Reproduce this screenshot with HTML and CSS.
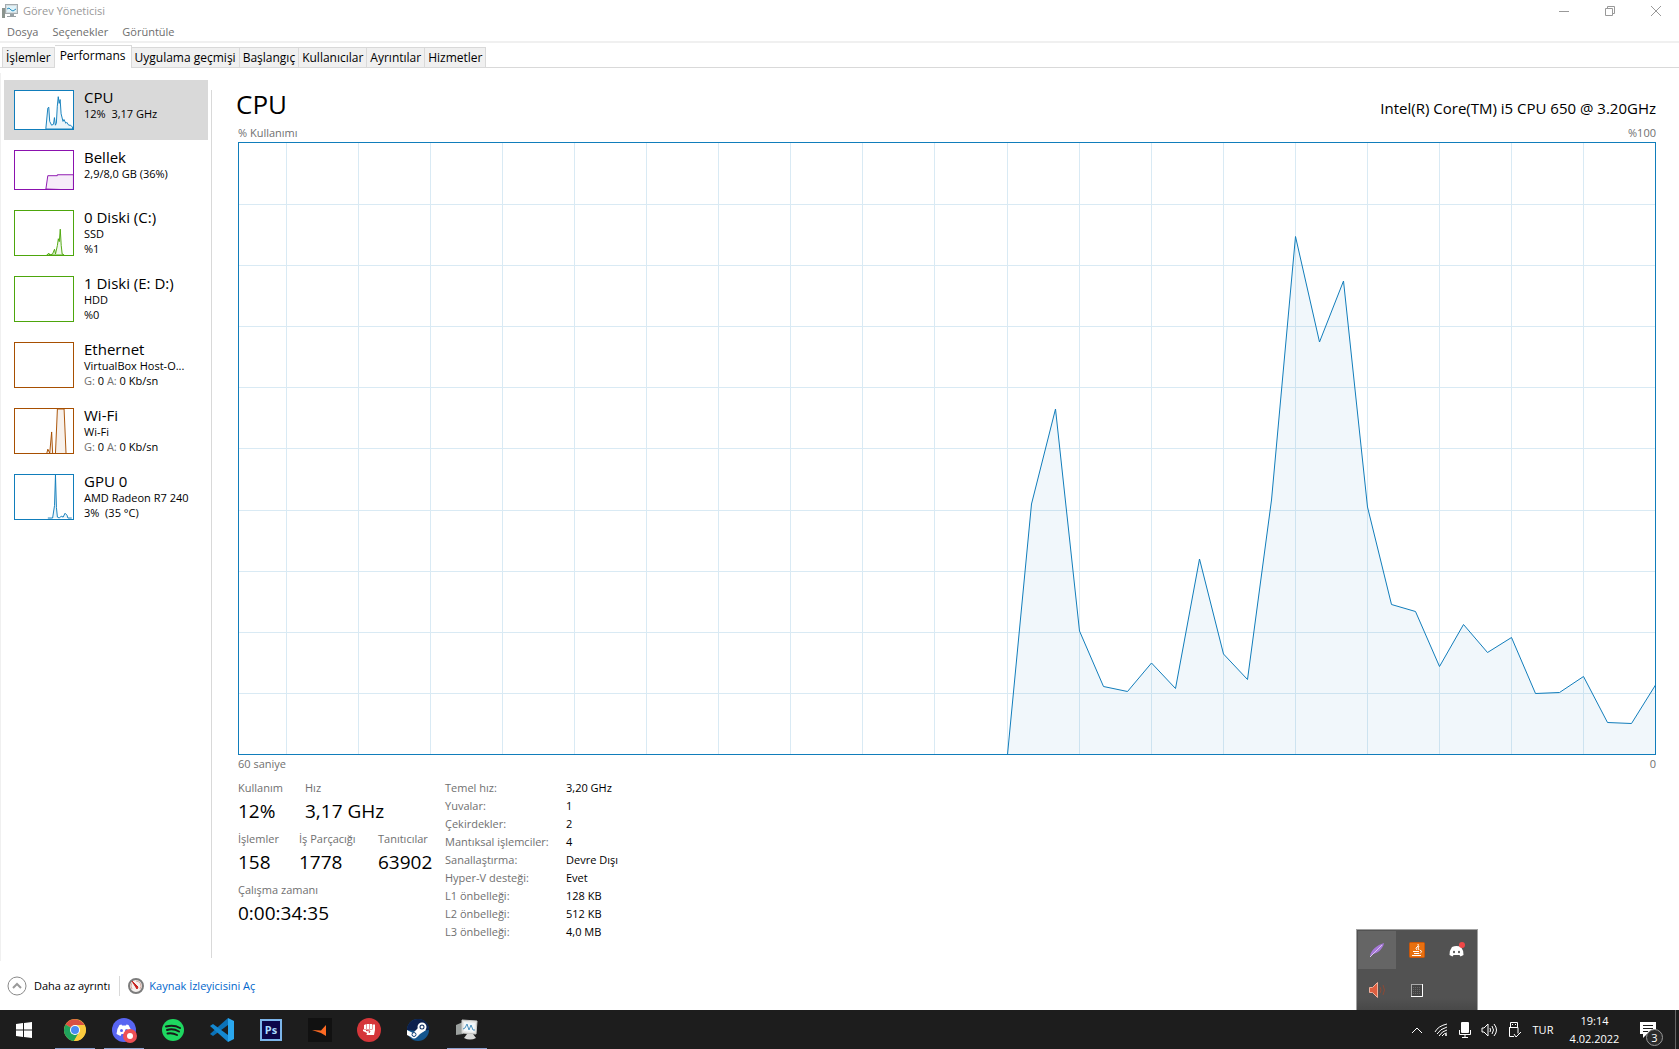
FILE: index.html
```
<!DOCTYPE html>
<html lang="tr">
<head>
    <meta charset="UTF-8">
    <title>Görev Yöneticisi</title>
    <link rel="stylesheet" href="styles.css">
</head>
<body>
    <div class="window">
        <header class="titlebar">
            <svg class="app-icon" width="16" height="15" viewBox="0 0 16 15">
                <rect x="0" y="4" width="3" height="10" fill="#8b948e"/>
                <rect x="3.500" y=".5" width="12" height="9" fill="#d5dde0" stroke="#a3abaf"/>
                <rect x="5" y="2" width="9" height="6" fill="#dff3fa"/>
                <path d="M5 5l2-1 2 2 2 1 3-2" fill="none" stroke="#2a8fc0"/>
                <path d="M8 10h4v2h2v1H5v-1h3z" fill="#98a1a5"/>
            </svg>
            <span class="title">Görev Yöneticisi</span>
            <button class="win-btn" aria-label="Simge durumuna küçült"><svg width="10" height="10"><path d="M0 5.500h10"/></svg></button>
            <button class="win-btn" aria-label="Önceki boyut"><svg width="10" height="10"><path d="M.5 2.500h7v7h-7zM2.500 2V.5h7v7H8"/></svg></button>
            <button class="win-btn" aria-label="Kapat"><svg width="10" height="10"><path d="M0 0l10 10M10 0L0 10"/></svg></button>
        </header>
        <nav class="menu">
            <button>Dosya</button>
            <button>Seçenekler</button>
            <button>Görüntüle</button>
        </nav>
        <div class="tabs">
            <button>İşlemler</button>
            <button class="active">Performans</button>
            <button>Uygulama geçmişi</button>
            <button>Başlangıç</button>
            <button>Kullanıcılar</button>
            <button>Ayrıntılar</button>
            <button>Hizmetler</button>
        </div>

        <div class="content">
            <aside class="sidebar">
                <button class="item selected">
                    <svg class="thumb blue" viewBox="0 0 60 40"><path d="M32 39L34 18L35 17L36 32L38 36L40 35L41 28L42 36L43 34L44 16L45 6L46 13L47 9L48 24L50 32L51 30L53 34L54 33L56 36L58 36L60 38V40H32z"/></svg>
                    <span class="info"><span class="name">CPU</span><span class="line">12%&nbsp; 3,17 GHz</span></span>
                </button>
                <button class="item">
                    <svg class="thumb purple" viewBox="0 0 60 40"><path d="M32 40L34 26H44V25H61V41z"/></svg>
                    <span class="info"><span class="name">Bellek</span><span class="line">2,9/8,0 GB (36%)</span></span>
                </button>
                <button class="item tall">
                    <svg class="thumb green" viewBox="0 0 60 46"><path d="M33 46L35 44L36 46L39 45L41 40L42 45L44 36L45 29L46 32L47 19L48 36L49 45L51 46z"/></svg>
                    <span class="info"><span class="name">0 Diski (C:)</span><span class="line">SSD</span><span class="line">%1</span></span>
                </button>
                <button class="item tall">
                    <svg class="thumb green" viewBox="0 0 60 46"></svg>
                    <span class="info"><span class="name">1 Diski (E: D:)</span><span class="line">HDD</span><span class="line">%0</span></span>
                </button>
                <button class="item tall">
                    <svg class="thumb brown" viewBox="0 0 60 46"></svg>
                    <span class="info"><span class="name">Ethernet</span><span class="line">VirtualBox Host-O...</span><span class="line"><i>G:</i> 0 <i>A:</i> 0 Kb/sn</span></span>
                </button>
                <button class="item tall">
                    <svg class="thumb brown" viewBox="0 0 60 46"><path d="M33 46L34 42L36 46L38 24L39 46M42 46L44 0H51L53 46"/></svg>
                    <span class="info"><span class="name">Wi-Fi</span><span class="line">Wi-Fi</span><span class="line"><i>G:</i> 0 <i>A:</i> 0 Kb/sn</span></span>
                </button>
                <button class="item tall">
                    <svg class="thumb blue" viewBox="0 0 60 46"><path d="M34 45H39L41 32L42 0L43 34L44 44L46 45L48 43L50 44L52 40L54 42L55 45H59"/></svg>
                    <span class="info"><span class="name">GPU 0</span><span class="line">AMD Radeon R7 240</span><span class="line">3%&nbsp; (35 °C)</span></span>
                </button>
            </aside>

            <main class="detail">
                <div class="heading">
                    <h1>CPU</h1>
                    <span class="model">Intel(R) Core(TM) i5 CPU 650 @ 3.20GHz</span>
                </div>
                <div class="axis"><span>% Kullanımı</span><span>%100</span></div>
                <div class="chart">
                    <svg viewBox="0 0 1416 611" preserveAspectRatio="none">
                        <path class="grid" d="M47.500 0V611M119.500 0V611M191.500 0V611M263.500 0V611M335.500 0V611M407.500 0V611M479.500 0V611M551.500 0V611M623.500 0V611M695.500 0V611M768.500 0V611M840.500 0V611M912.500 0V611M984.500 0V611M1056.500 0V611M1128.500 0V611M1200.500 0V611M1272.500 0V611M1344.500 0V611"/>
                        <path class="grid" d="M0 61.500H1416M0 122.500H1416M0 183.500H1416M0 244.500H1416M0 305.500H1416M0 367.500H1416M0 428.500H1416M0 489.500H1416M0 550.500H1416"/>
                        <path class="usage" d="M768.500 611.500L792.500 361L816.500 266L840.500 488L864.500 543.500L888.500 548.500L912.500 520L936.500 545.500L960.500 416L984.500 511L1008.500 536.500L1032.500 357L1056.500 93.500L1080.500 199L1104.500 138L1128.500 364L1152.500 461.500L1176.500 468.500L1200.500 523.500L1224.500 481.500L1248.500 509.500L1272.500 494.500L1296.500 550.500L1320.500 549.500L1344.500 533.500L1368.500 579.500L1392.500 580.500L1416.500 542V611.500z"/>
                    </svg>
                </div>
                <div class="axis below"><span>60 saniye</span><span>0</span></div>
                <div class="stats">
                    <div class="live">
                        <div class="row">
                            <div class="stat first-wide"><span>Kullanım</span><b>12%</b></div>
                            <div class="stat"><span>Hız</span><b>3,17 GHz</b></div>
                        </div>
                        <div class="row">
                            <div class="stat first"><span>İşlemler</span><b>158</b></div>
                            <div class="stat second"><span>İş Parçacığı</span><b>1778</b></div>
                            <div class="stat"><span>Tanıtıcılar</span><b>63902</b></div>
                        </div>
                        <div class="row">
                            <div class="stat"><span>Çalışma zamanı</span><b>0:00:34:35</b></div>
                        </div>
                    </div>
                    <table class="specs">
                        <tr><th>Temel hız:</th><td>3,20 GHz</td></tr>
                        <tr><th>Yuvalar:</th><td>1</td></tr>
                        <tr><th>Çekirdekler:</th><td>2</td></tr>
                        <tr><th>Mantıksal işlemciler:</th><td>4</td></tr>
                        <tr><th>Sanallaştırma:</th><td>Devre Dışı</td></tr>
                        <tr><th>Hyper-V desteği:</th><td>Evet</td></tr>
                        <tr><th>L1 önbelleği:</th><td>128 KB</td></tr>
                        <tr><th>L2 önbelleği:</th><td>512 KB</td></tr>
                        <tr><th>L3 önbelleği:</th><td>4,0 MB</td></tr>
                    </table>
                </div>
            </main>
        </div>

        <footer class="footer">
            <button class="less">
                <svg width="20" height="20" viewBox="0 0 20 20" fill="none"><circle cx="10" cy="10" r="9" stroke="#8a8a8a"/><path d="M6 12l4-4 4 4" stroke="#9a9a9a" stroke-width="2"/></svg>
                Daha az ayrıntı
            </button>
            <a class="monitor" href="#">
                <svg width="16" height="16" viewBox="0 0 16 16"><circle cx="8" cy="8" r="7" fill="#f4f0ee" stroke="#7c7c7c" stroke-width="2"/><path d="M4 11a5 5 0 0 1 0-6M8 3a5 5 0 0 1 4 8" fill="none" stroke="#d0a79c"/><path d="M4 3l6 6-1 2z" fill="#c8201c" stroke="#c8201c"/></svg>
                Kaynak İzleyicisini Aç
            </a>
        </footer>
    </div>

    <div class="tray-popup">
        <button class="on" aria-label="Kalem"><svg width="16" height="16" viewBox="0 0 16 16"><path d="M1 14C2 8 8 3 15 1C14 7 9 11 4 12z" fill="#a678d8"/><path d="M1 15L13 3" stroke="#dcc3f5"/></svg></button>
        <button aria-label="Java"><svg width="16" height="16" viewBox="0 0 16 16"><rect x=".5" y=".5" width="15" height="15" rx="1" fill="#e8700f" stroke="#c9560a"/><path d="M9 2q1 2-1 3t0 3M10 4q-2 2 0 4M4 9.500h6M5 11.500h5M3 13.500h9M11 8.500q3 0 0 3" fill="none" stroke="#fff"/></svg></button>
        <button aria-label="Discord"><svg width="16" height="16" viewBox="0 0 16 16"><path d="M3 5q4.500-2 9 0 3 4 2.500 8l-3 1.500-1-1.500h-6l-1 1.500L.5 13Q0 9 3 5z" fill="#fff"/><ellipse cx="5" cy="10" rx="1" ry="1.300" fill="#525252"/><ellipse cx="10" cy="10" rx="1" ry="1.300" fill="#525252"/><circle cx="13" cy="3" r="3" fill="#f04747"/></svg></button>
        <button aria-label="Ses"><svg width="16" height="16" viewBox="0 0 16 16"><path d="M.5 5.500h3l5-5v15l-5-5h-3z" fill="#dd5f40" stroke="#f0b09c"/><path d="M11 5q2 3 0 6M14 3q3 5 0 10" fill="none" stroke="#8b4a36"/></svg></button>
        <button aria-label="Aygıt"><svg width="12" height="13" viewBox="0 0 12 13"><rect x=".5" y=".5" width="11" height="12" fill="#454545" stroke="#aaa"/><path d="M11.500 0v12.500H0" fill="none" stroke="#fff"/><path d="M2 3.500h8M2 5.500h8M2 7.500h8M2 9.500h8" stroke="#666" stroke-dasharray="1 1"/></svg></button>
    </div>

    <div class="taskbar">
        <button class="task" aria-label="Başlat"><svg width="16" height="16" viewBox="0 0 16 16" fill="#fff"><path d="M0 2l7-1v6.500H0zM8 1l8-1v7.500H8zM0 8.500h7V15l-7-1zM8 8.500h8V16l-8-1z"/></svg></button>
        <button class="task open" aria-label="Chrome"><svg width="22" height="22" viewBox="0 0 22 22"><circle cx="11" cy="11" r="11" fill="#fbcb3e"/><path d="M11 11L1.500 5.500A11 11 0 0 1 20.500 6H11z" fill="#d95043"/><path d="M11 11L1.500 5.500A11 11 0 0 0 10 22L15 14z" fill="#1fa35c"/><path d="M11 6h9.500A11 11 0 0 1 10 22l5-9z" fill="#fbcb3e"/><circle cx="11" cy="11" r="5" fill="#fff"/><circle cx="11" cy="11" r="4" fill="#4a8af4"/></svg></button>
        <button class="task open" aria-label="Discord"><svg width="25" height="25" viewBox="0 0 25 25"><circle cx="12" cy="12" r="12" fill="#5865f2"/><path d="M7.500 7l2-.5.500 1h4l.5-1 2 .5q3 4 3 9l-4 2-1-2h-5l-1 2-4-2q0-5 3-9z" fill="#fff"/><circle cx="9.500" cy="12.500" r="1.500" fill="#5865f2"/><circle cx="14.500" cy="12.500" r="1.500" fill="#5865f2"/><circle cx="18" cy="18" r="7" fill="#ed5055"/><circle cx="18" cy="18" r="3" fill="#fff"/></svg></button>
        <button class="task" aria-label="Spotify"><svg width="22" height="22" viewBox="0 0 22 22"><circle cx="11" cy="11" r="11" fill="#1ed760"/><path d="M4 7.500q8-2 14 1.500M5 11q6-2 12 1.500M5.500 14.500q5-1 9.500 1.500" fill="none" stroke="#191919" stroke-width="2" stroke-linecap="round"/></svg></button>
        <button class="task" aria-label="Visual Studio Code"><svg width="24" height="24" viewBox="0 0 24 24"><path d="M18 0v7L3 18l-3-2z" fill="#0b72b8"/><path d="M18 24v-7L3 6 0 8z" fill="#1488d0"/><path d="M18 0l6 3v18l-6 3z" fill="#2aa7ee"/></svg></button>
        <button class="task" aria-label="Photoshop"><svg width="22" height="22" viewBox="0 0 22 22"><rect x="1" y="1" width="20" height="20" fill="#0c0649" stroke="#7cb5ea" stroke-width="2"/><text class="ps" x="11" y="15" text-anchor="middle">Ps</text></svg></button>
        <button class="task" aria-label="FACEIT"><svg width="24" height="24" viewBox="0 0 24 24"><rect width="24" height="24" fill="#111"/><path d="M4 12l9 .5L18 7v11q-6-4-14-6z" fill="#fd6a23"/></svg></button>
        <button class="task" aria-label="Yumruk"><svg width="24" height="24" viewBox="0 0 24 24"><circle cx="12" cy="12" r="12" fill="#d5363a"/><path d="M7 7l2.500-1v5H7zM10 6h2.500v5H10zM13 6h2v5h-2zM15.500 6.500H18V12l-1 5H9.500L10 15l-4-2v-1.500h9.500z" fill="#fff"/><path d="M9 12.500l4 .5-1 2" fill="none" stroke="#d5363a"/></svg></button>
        <button class="task" aria-label="Steam"><svg width="22" height="22" viewBox="0 0 22 22"><circle cx="11" cy="11" r="11" fill="#14568e"/><path d="M0 11a11 11 0 0 1 22 0l-11 1z" fill="#0c1f4c"/><path d="M0 11l6 3 5-5 2-3 6 5-6 4-3 3q-3 3-6 0l-4-2z" fill="#fff"/><circle cx="7" cy="15.500" r="2" fill="#fff" stroke="#14467c"/><circle cx="15" cy="8" r="3.500" fill="#0c2a5c" stroke="#fff" stroke-width="2"/><circle cx="15" cy="8" r="1.500" fill="#fff"/></svg></button>
        <button class="task open" aria-label="Görev Yöneticisi"><svg width="24" height="22" viewBox="0 0 24 22"><path d="M1 6l7-3v12l-7 1z" fill="#9ba09e"/><path d="M7 1l15 1-1 13-14-1z" fill="#e8e8e6" stroke="#c9cbca"/><path d="M9 3l11 1-1 9-10-1z" fill="#f2f8fb"/><path d="M8 10l2-1 2-4 2 6 2-5 2 5h2" fill="none" stroke="#4a90bd"/><path d="M12 15h6l3 4q-6 3-12 0z" fill="#d8d9d8"/></svg></button>

        <div class="tray">
            <button class="chev" aria-label="Gizli simgeler"><svg width="12" height="8" viewBox="0 0 12 8"><path d="M1 7l5-5 5 5"/></svg></button>
            <button aria-label="Ağ"><svg width="14" height="14" viewBox="0 0 14 14"><path d="M1 9Q4 3 13 1M3 11Q6 6 13 4M5 13q3-5 8-6M8 13q2-3 5-3"/><circle cx="12" cy="12" r="1" fill="#fff"/></svg></button>
            <button class="mic" aria-label="Mikrofon"><svg width="12" height="16" viewBox="0 0 12 16"><rect x="2" y="0" width="8" height="11" rx="1" fill="#fff"/><path d="M.5 8v4.500h11V8M6 13v2.500M3 15.500h6"/></svg></button>
            <button class="sound" aria-label="Ses düzeyi"><svg width="17" height="14" viewBox="0 0 17 14"><path d="M1 5h2l4-4v12L3 9H1zM9 5q1 2 0 4M11 3q3 4 0 8M13 1q5 6 0 12"/></svg></button>
            <button aria-label="USB"><svg width="13" height="16" viewBox="0 0 13 16"><path d="M2.500 5V.5h7V5M1 5.500h9v6M1.500 5v9.500H6M4 2.500h1M7 2.500h1M6 12l2 3 5-5"/></svg></button>
            <button class="lang">TUR</button>
            <button class="clock"><span>19:14</span><span>4.02.2022</span></button>
            <button class="notes" aria-label="Bildirimler"><svg width="16" height="16" viewBox="0 0 16 16"><path class="bubble" d="M0 0h16v12H7l-4 4v-4H0z"/><path class="text-lines" d="M3 3.500h10M3 6.500h10M3 9.500h5"/></svg><span class="badge">3</span></button>
        </div>
    </div>
</body>
</html>
```
FILE: styles.css
```
*{
    box-sizing: border-box;
    margin: 0;
    padding: 0;
}
body{
    display: flex;
    flex-direction: column;
    min-height: 100vh;
    font: 11px/16px "Open Sans","Noto Sans",sans-serif;
    color: #000;
    background: #fff;
}
button{
    border: 0;
    background: none;
    font: inherit;
    color: inherit;
}
svg{
    display: block;
    flex: none;
}
.window{
    flex: 1;
    display: flex;
    flex-direction: column;
}
/* title bar and menu */
.titlebar{
    display: flex;
    align-items: center;
    height: 22px;
    padding-left: 2px;
    color: #999;
}
.title{
    flex: 1;
    padding-left: 5px;
}
.win-btn{
    display: flex;
    justify-content: center;
    align-items: center;
    width: 46px;
    height: 20px;
}
.win-btn path{
    fill: none;
    stroke: #999;
}
.menu{
    display: flex;
    align-items: center;
    height: 21px;
    padding-left: 7px;
    gap: 14px;
    color: #6d6d6d;
    border-bottom: 2px solid #f0f0f0;
}
/* tabs */
.tabs{
    display: flex;
    align-items: flex-end;
    height: 25px;
    padding-left: 2px;
    font-size: 12px;
    border-bottom: 1px solid #d9d9d9;
}
.tabs button{
    height: 20px;
    padding: 0 3px;
    background: #f0f0f0;
    border: 1px solid #d9d9d9;
    border-width: 1px 1px 0 0;
}
.tabs button:first-child{
    border-left-width: 1px;
}
.tabs .active{
    height: 23px;
    margin-bottom: -1px;
    padding: 0 5px 2px;
    background: #fff;
}
/* body */
.content{
    flex: 1;
    display: flex;
    margin-top: 5px;
    border-left: 1px solid #f0f0f0;
}
.sidebar{
    width: 210px;
    padding: 7px 0 0 3px;
}
.item{
    display: flex;
    gap: 10px;
    width: 204px;
    height: 60px;
    padding: 10px;
    text-align: left;
}
.item.tall{
    height: 66px;
}
.selected{
    background: #d9d9d9;
}
.thumb{
    width: 60px;
    height: 40px;
    background: #fff;
    border: 1px solid currentColor;
}
.tall .thumb{
    height: 46px;
}
.thumb path{
    fill: currentColor;
    fill-opacity: .08;
    stroke: currentColor;
}
.blue{
    color: #117dbb;
}
.purple{
    color: #8b12ae;
}
.green{
    color: #4da60c;
}
.brown{
    color: #a74f01;
}
.info{
    display: flex;
    flex-direction: column;
    margin-top: -2px;
    white-space: nowrap;
}
.name{
    font-size: 15px;
    line-height: 18px;
}
.line{
    line-height: 15px;
}
.line i{
    font-style: normal;
    color: #707070;
}
.detail{
    flex: 1;
    display: flex;
    flex-direction: column;
    margin: 17px 0 3px;
    padding: 0 23px 0 26px;
    border-left: 1px solid #d9d9d9;
}
.heading{
    display: flex;
    justify-content: space-between;
    align-items: baseline;
    height: 35px;
    margin-left: -2px;
    line-height: 28px;
}
h1{
    font-size: 26px;
    font-weight: normal;
}
.model{
    font-size: 15px;
}
.axis{
    display: flex;
    justify-content: space-between;
    height: 17px;
    color: #707070;
}
.axis.below{
    padding-top: 1px;
}
.chart{
    flex: 1;
    display: flex;
    min-height: 200px;
    border: 1px solid #117dbb;
}
.chart svg{
    flex: 1;
    width: 100%;
    height: 100%;
}
.chart path{
    vector-effect: non-scaling-stroke;
}
.grid{
    stroke: #d9eaf4;
}
.usage{
    fill: rgba(17,125,187,.06);
    stroke: #117dbb;
}
.stats{
    display: flex;
    height: 186px;
    padding-top: 7px;
}
.live{
    width: 207px;
}
.row{
    display: flex;
    height: 51px;
}
.stat span,
.stat b{
    display: block;
}
.stat span{
    line-height: 18px;
    color: #707070;
}
.stat b{
    font-size: 19px;
    font-weight: normal;
    line-height: 28px;
}
.first-wide{
    width: 67px;
}
.first{
    width: 61px;
}
.second{
    width: 79px;
}
.specs{
    height: 162px;
    border-collapse: collapse;
    line-height: 18px;
}
.specs th{
    width: 121px;
    font-weight: normal;
    text-align: left;
    color: #707070;
}
/* footer */
.footer{
    display: flex;
    align-items: center;
    height: 49px;
    padding-left: 7px;
}
.less,
.monitor{
    display: flex;
    align-items: center;
}
.less{
    gap: 7px;
    padding-right: 9px;
    border-right: 1px solid #d9d9d9;
}
.monitor{
    gap: 5px;
    padding-left: 8px;
    color: #0066cc;
    text-decoration: none;
}
/* hidden icons popup */
.tray-popup{
    position: absolute;
    right: 201px;
    bottom: 39px;
    display: grid;
    grid-template-columns: repeat(3,40px);
    grid-template-rows: repeat(2,40px);
    width: 122px;
    height: 81px;
    background: linear-gradient(#525252 85%,#484848);
    border: 1px solid #a0a0a0;
    border-bottom: 0;
}
.tray-popup button{
    display: flex;
    justify-content: center;
    align-items: center;
    margin: 1px;
}
.tray-popup .on{
    background: #656565;
}
/* taskbar */
.taskbar{
    display: flex;
    height: 39px;
    color: #fff;
    background: #1d1d1d;
}
.task{
    display: flex;
    justify-content: center;
    align-items: center;
    width: 40px;
    margin-right: 9px;
    padding-top: 2px;
    border-bottom: 1px solid transparent;
}
.task:first-child{
    margin-left: 4px;
    margin-right: 11px;
}
.task.open{
    border-color: #8aa0cc;
}
.ps{
    font: bold 11px "Open Sans",sans-serif;
    fill: #a9dcff;
}
.tray{
    display: flex;
    align-items: center;
    margin-left: auto;
    padding-right: 3px;
}
.tray button{
    display: flex;
    justify-content: center;
    align-items: center;
    width: 24px;
    height: 39px;
}
.tray path{
    fill: none;
    stroke: #fff;
}
.tray .sound{
    width: 25px;
}
.tray .lang{
    width: 34px;
}
.tray .clock{
    flex-direction: column;
    width: 69px;
    line-height: 18px;
}
.tray .notes{
    position: relative;
    width: 47px;
    padding-right: 9px;
    border-right: 1px solid #666;
}
.tray .bubble{
    fill: #fff;
    stroke: none;
}
.tray .text-lines{
    stroke: #1d1d1d;
}
.badge{
    position: absolute;
    right: 12px;
    bottom: 3px;
    width: 17px;
    height: 17px;
    border: 1px solid #999;
    border-radius: 50%;
    background: #2b2b2b;
    line-height: 15px;
}
```
